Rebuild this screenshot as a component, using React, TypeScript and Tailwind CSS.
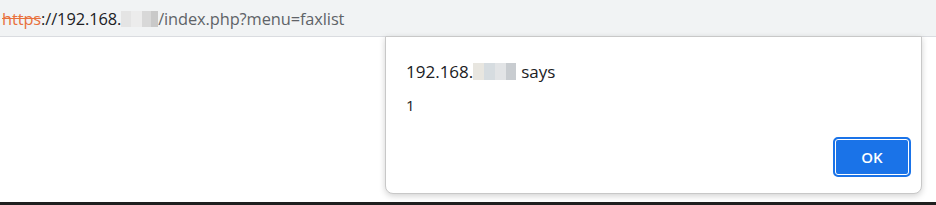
export default function App() {
  return (
    <div
      className="relative flex h-[205px] w-[936px] flex-col overflow-hidden bg-white"
      style={{ fontFamily: '"Open Sans", "Liberation Sans", Arial, sans-serif' }}
    >
      {/* address bar */}
      <div className="flex h-[37px] shrink-0 items-center border-b border-[#dadce0] bg-[#f1f3f4] pl-[2px] pt-[2px] text-[16.4px] tracking-[-0.1px]">
        <span className="text-[#e8713c] line-through decoration-[#e8713c]">https</span>
        <span className="text-[#202124]">://192.168.</span>
        <span className="flex h-[16px] items-center">
          <span className="h-[16px] w-[10px] bg-[#e4e4e4]" />
          <span className="h-[16px] w-[11px] bg-[#ececec]" />
          <span className="h-[16px] w-[9px] bg-[#d8d8d8]" />
          <span className="h-[16px] w-[7px] bg-[#c9c9c9]" />
        </span>
        <span className="text-[#5f6368]">/index.php?menu=faxlist</span>
      </div>

      <div className="flex-1" />
      <div className="h-[3px] shrink-0 bg-[#1f1f1f]" />

      {/* alert dialog */}
      <div className="absolute left-[385px] top-[36px] flex h-[158px] w-[537px] flex-col rounded-b-[8px] border border-[#c8c8c8] bg-white px-[20px] shadow-[0_2px_6px_rgba(0,0,0,0.18)]">
        <div className="mt-[22px] flex items-center text-[17px] text-[#202124]">
          <span>192.168.</span>
          <span className="flex h-[17px] items-center">
            <span className="h-[17px] w-[11px] bg-[#e8e6e0]" />
            <span className="h-[17px] w-[11px] bg-[#d6dce0]" />
            <span className="h-[17px] w-[11px] bg-[#e2e4e6]" />
            <span className="h-[17px] w-[10px] bg-[#c8ccd0]" />
          </span>
          <span className="ml-[5px]">says</span>
        </div>
        <div className="mt-[9px] text-[15px] text-[#202124]">1</div>
        <div className="mt-auto mb-[16px] flex justify-end">
          <button className="-mr-[10px] flex h-[40px] w-[78px] items-center justify-center rounded-[5px] border-2 border-[#1a73e8] bg-[#1a73e8] text-[15px] font-semibold text-white ring-1 ring-inset ring-white">
            OK
          </button>
        </div>
      </div>
    </div>
  );
}
